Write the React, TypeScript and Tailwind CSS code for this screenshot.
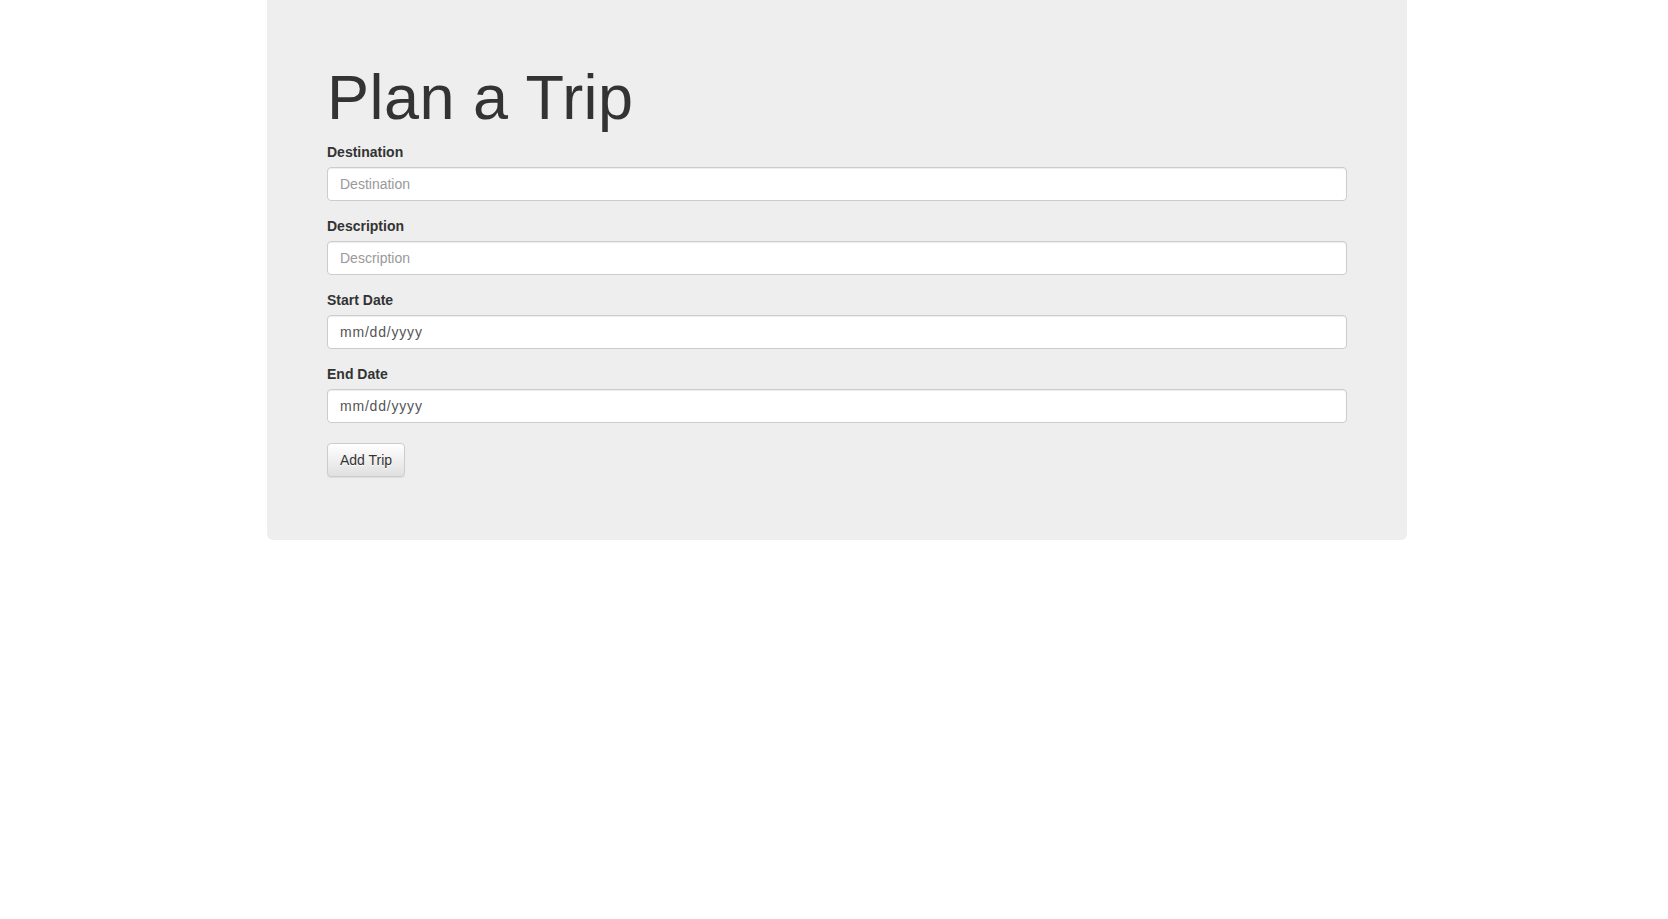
const FIELDS = [
  { id: 'destination', label: 'Destination', placeholder: 'Destination', date: false },
  { id: 'description', label: 'Description', placeholder: 'Description', date: false },
  { id: 'startDate', label: 'Start Date', placeholder: 'mm/dd/yyyy', date: true },
  { id: 'endDate', label: 'End Date', placeholder: 'mm/dd/yyyy', date: true },
]

export default function App() {
  return (
    <div className="min-h-screen bg-white text-[#333] text-[14px] leading-[20px] font-['Liberation_Sans',Arial,sans-serif]">
      {/* Jumbotron */}
      <div className="ml-[267px] w-[1140px] bg-[#eee] rounded-b-[6px] px-[60px] pt-[63px] pb-[63px]">
        <h1 className="text-[63px] leading-[1.1] font-normal mb-[10px] tracking-[0.5px]">Plan a Trip</h1>

        <form onSubmit={(e) => e.preventDefault()}>
          {FIELDS.map((f) => (
            <div key={f.id} className="mb-[15px]">
              <label htmlFor={f.id} className="block font-bold mb-[5px]">
                {f.label}
              </label>
              <input
                id={f.id}
                type="text"
                placeholder={f.placeholder}
                className={
                  'block w-full h-[34px] px-[12px] py-[6px] bg-white border border-[#ccc] rounded-[4px] shadow-[inset_0_1px_1px_rgba(0,0,0,0.075)] outline-none text-[14px] text-[#555] ' +
                  (f.date ? 'placeholder:text-[#555] tracking-[0.8px]' : 'placeholder:text-[#999]')
                }
              />
            </div>
          ))}

          <button
            type="submit"
            className="mt-[5px] h-[34px] px-[12px] border border-[#ccc] rounded-[4px] bg-gradient-to-b from-white to-[#e0e0e0] text-[#333] text-[14px] [text-shadow:0_1px_0_#fff] shadow-[inset_0_1px_0_rgba(255,255,255,0.15),0_1px_1px_rgba(0,0,0,0.075)]"
          >
            Add Trip
          </button>
        </form>
      </div>
    </div>
  )
}
